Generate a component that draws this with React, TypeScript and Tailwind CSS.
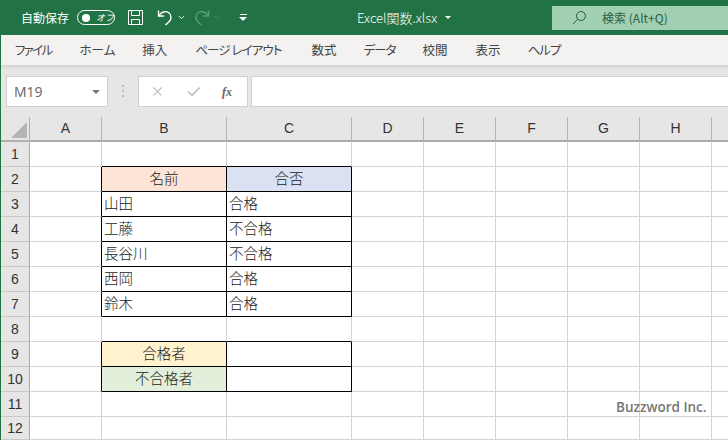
import { ChevronDown, Check, X } from 'lucide-react';

const jp = "font-['Noto_Sans_CJK_JP','Noto_Sans',sans-serif]";
const tabs = [
  { label: 'ファイル', cls: 'tracking-[-1.7px] mr-[1px]' },
  { label: 'ホーム', cls: '' },
  { label: '挿入', cls: '' },
  { label: 'ページ レイアウト', cls: 'tracking-[-0.9px] ml-[1px] mr-[2px]' },
  { label: '数式', cls: 'ml-[1px]' },
  { label: 'データ', cls: 'tracking-[-1px]' },
  { label: '校閲', cls: '' },
  { label: '表示', cls: 'ml-[1px]' },
  { label: 'ヘルプ', cls: 'tracking-[-1px]' },
];
const colWidths = [72, 125, 125, 72, 72, 72, 72, 72, 17];
const colNames = ['A', 'B', 'C', 'D', 'E', 'F', 'G', 'H', ''];
const rows = [1, 2, 3, 4, 5, 6, 7, 8, 9, 10, 11, 12];

type Cell = { text: string; bg?: string; center?: boolean };

const cells: Record<string, Cell> = {
  '2-1': { text: '名前', bg: 'bg-[#fce4d6]', center: true },
  '2-2': { text: '合否', bg: 'bg-[#d9e1f2]', center: true },
  '3-1': { text: '山田' },
  '3-2': { text: '合格' },
  '4-1': { text: '工藤' },
  '4-2': { text: '不合格' },
  '5-1': { text: '長谷川' },
  '5-2': { text: '不合格' },
  '6-1': { text: '西岡' },
  '6-2': { text: '合格' },
  '7-1': { text: '鈴木' },
  '7-2': { text: '合格' },
  '9-1': { text: '合格者', bg: 'bg-[#fff2cc]', center: true },
  '9-2': { text: '' },
  '10-1': { text: '不合格者', bg: 'bg-[#e2efda]', center: true },
  '10-2': { text: '' },
};

const isBoxed = (row: number, col: number) => Boolean(cells[`${row}-${col}`]);

function SheetCell({ row, col }: { row: number; col: number }) {
  const cell = cells[`${row}-${col}`];
  const blackRight = isBoxed(row, col) || isBoxed(row, col + 1);
  const blackBottom = isBoxed(row, col) || isBoxed(row + 1, col);

  return (
    <div
      className={`flex items-center overflow-hidden border-r border-b pb-[3px] text-[14.5px] font-light text-[#222] ${jp} ${
        blackRight ? 'border-r-black' : 'border-r-[#d4d4d4]'
      } ${blackBottom ? 'border-b-black' : 'border-b-[#d4d4d4]'} ${cell?.bg ?? 'bg-white'} ${
        cell?.center ? 'justify-center' : 'pl-[2px]'
      }`}
    >
      {cell?.text}
    </div>
  );
}

function SaveIcon() {
  return (
    <svg width="17" height="17" viewBox="0 0 17 17" fill="none" stroke="white" strokeWidth="1">
      <path d="M1.5 1.5h14v14h-14z" />
      <path d="M4.5 1.5v5h8v-5M4.5 15.5v-5h8v5" />
    </svg>
  );
}

function UndoIcon({ dim }: { dim?: boolean }) {
  return (
    <svg
      width="17"
      height="17"
      viewBox="0 0 17 17"
      fill="none"
      stroke={dim ? '#5f9c7c' : 'white'}
      strokeWidth="1.4"
      className={dim ? '-scale-x-100' : ''}
    >
      <path d="M1.5 1.5v5.5h5.5" />
      <path d="M1.8 6.8C4 3 8.5 1.5 11.5 3.5c3 2 3.2 6.5.8 9L8.5 16" />
    </svg>
  );
}

export default function App() {
  return (
    <div className={`relative flex h-[440px] w-[728px] flex-col overflow-hidden border-l border-l-[#217346] bg-white ${jp}`}>
      <div className="flex h-[35px] shrink-0 items-center bg-[#217346] text-white">
        <span className="ml-[20px] text-[12px]">自動保存</span>
        <div className="ml-[8px] flex h-[15px] w-[38px] items-center rounded-full border border-white pl-[4px]">
          <div className="h-[8px] w-[8px] rounded-full bg-white" />
          <span className="ml-[6px] text-[9px] italic leading-none">オフ</span>
        </div>
        <div className="ml-[12px] flex">
          <SaveIcon />
        </div>
        <div className="ml-[13px] flex">
          <UndoIcon />
        </div>
        <ChevronDown className="ml-[3px] h-[9px] w-[9px]" strokeWidth={2.4} />
        <div className="ml-[7px] flex">
          <UndoIcon dim />
        </div>
        <ChevronDown className="ml-[2px] h-[9px] w-[9px] text-[#5f9c7c]" strokeWidth={2} />
        <div className="ml-[18px] flex flex-col items-center gap-[2px]">
          <div className="h-px w-[7px] bg-white" />
          <div className="h-0 w-0 border-x-[4px] border-t-[4px] border-x-transparent border-t-white" />
        </div>
        <span className="ml-[110px] text-[13px] font-light">Excel関数.xlsx</span>
        <div className="ml-[8px] h-0 w-0 border-x-[3px] border-t-[3px] border-x-transparent border-t-white" />
        <div className="ml-[101px] flex h-[24px] flex-1 items-center bg-[#a0cfb2] pl-[20px] text-[#2b5f45]">
          <svg width="15" height="15" viewBox="0 0 15 15" fill="none" stroke="currentColor" strokeWidth="1">
            <circle cx="9" cy="6" r="4.5" />
            <path d="M5.8 9.2 1 14" />
          </svg>
          <span className="ml-[15px] text-[12px]">検索 (Alt+Q)</span>
        </div>
      </div>

      <div className="flex h-[30px] shrink-0 items-center gap-[27px] bg-[#f3f2f1] pl-[14px] text-[12.5px] text-[#444] [font-feature-settings:'palt']">
        {tabs.map((tab) => (
          <span key={tab.label} className={tab.cls}>
            {tab.label}
          </span>
        ))}
      </div>

      <div className="h-[5px] shrink-0 bg-gradient-to-b from-[#d4d3d2] to-[#e6e6e6]" />

      <div className="flex h-[47px] shrink-0 items-start bg-[#e6e6e6] pt-[6px]">
        <div className="ml-[5px] flex h-[31px] w-[102px] items-center justify-between border border-[#d0d0d0] bg-white pl-[7px] pr-[7px]">
          <span className="font-['Open_Sans',sans-serif] text-[14px] text-[#666]">M19</span>
          <div className="h-0 w-0 border-x-[4px] border-t-[4px] border-x-transparent border-t-[#777]" />
        </div>
        <div className="ml-[14px] mt-[9px] flex flex-col gap-[3px]">
          <div className="h-[2px] w-[2px] bg-[#bbb]" />
          <div className="h-[2px] w-[2px] bg-[#bbb]" />
          <div className="h-[2px] w-[2px] bg-[#bbb]" />
        </div>
        <div className="ml-[14px] flex h-[31px] w-[110px] items-center border border-[#d0d0d0] bg-white text-[#c0c0c0]">
          <X className="ml-[11px] h-[15px] w-[15px]" strokeWidth={1.8} />
          <Check className="ml-[21px] h-[16px] w-[16px]" strokeWidth={2.6} />
          <span className="ml-[20px] font-['Liberation_Serif',serif] text-[12px] font-bold italic text-[#666]">fx</span>
        </div>
        <div className="ml-[3px] h-[31px] flex-1 border-y border-l border-[#d0d0d0] bg-white" />
      </div>

      <div className="grid flex-1 grid-cols-[29px_72px_125px_125px_72px_72px_72px_72px_72px_17px] grid-rows-[25px_repeat(11,25px)_23px]">
        <div className="flex items-end justify-end border-b-2 border-r border-[#b0b0b0] bg-[#e6e6e6] p-[2px]">
          <div className="h-0 w-0 border-b-[16px] border-l-[16px] border-b-[#b4b4b4] border-l-transparent" />
        </div>
        {colNames.map((name, i) => (
          <div
            key={i}
            className="flex items-center justify-center border-b-2 border-r border-b-[#ababab] border-r-[#b4b4b4] bg-[#e6e6e6] font-['Liberation_Sans',sans-serif] text-[14px] text-[#333]"
          >
            {name}
          </div>
        ))}
        {rows.map((row) => (
          <div key={row} className="contents">
            <div className="flex items-center justify-center border-b border-r border-b-[#c8c8c8] border-r-[#ababab] bg-[#e6e6e6] font-['Liberation_Sans',sans-serif] text-[14px] text-[#333]">
              {row}
            </div>
            {colWidths.map((_, col) => (
              <SheetCell key={col} row={row} col={col} />
            ))}
          </div>
        ))}
      </div>

      <span className="absolute left-[615px] top-[397px] font-['Open_Sans',sans-serif] text-[13.5px] font-semibold text-[#777]">
        Buzzword Inc.
      </span>
    </div>
  );
}
